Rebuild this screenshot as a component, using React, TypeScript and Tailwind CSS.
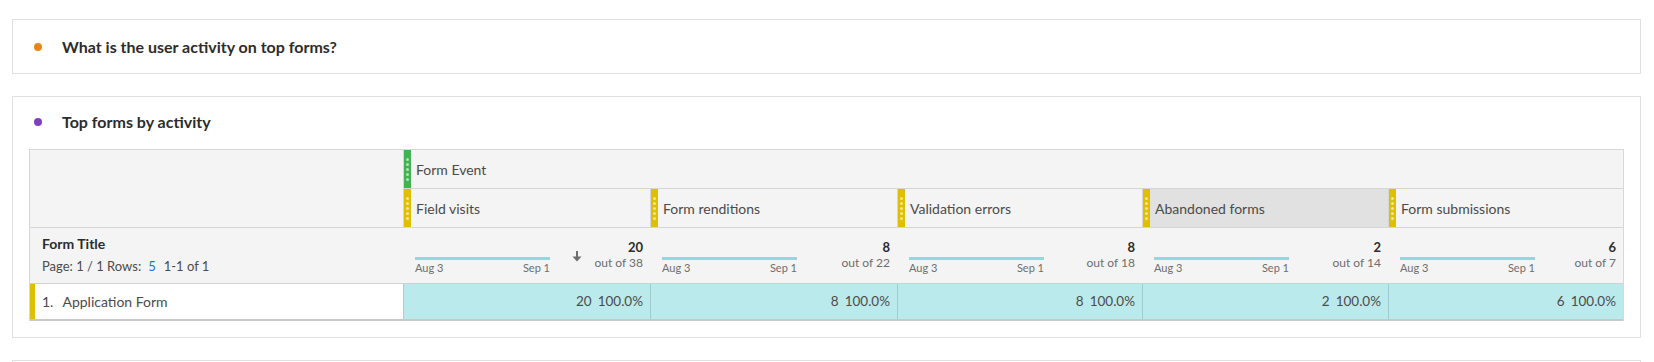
import React from "react";

type Col = {
  name: string;
  w: string;
  total: string;
  out: string;
  val: string;
  arrow?: boolean;
  active?: boolean;
};

const cols: Col[] = [
  { name: "Field visits", w: "w-[247px]", total: "20", out: "38", val: "20", arrow: true },
  { name: "Form renditions", w: "w-[247px]", total: "8", out: "22", val: "8" },
  { name: "Validation errors", w: "w-[245px]", total: "8", out: "18", val: "8" },
  { name: "Abandoned forms", w: "w-[246px]", total: "2", out: "14", val: "2", active: true },
  { name: "Form submissions", w: "w-[235px]", total: "6", out: "7", val: "6" },
];

function Bar({ color }: { color: string }) {
  return (
    <div className={`w-[7px] self-stretch flex flex-col items-center justify-center gap-[2px] ${color}`}>
      {[0, 1, 2, 3, 4].map((i) => (
        <span key={i} className="block w-[3px] h-[3px] rounded-full bg-white/60" />
      ))}
    </div>
  );
}

function Arrow() {
  return (
    <svg width="10" height="11" viewBox="0 0 10 11" className="block">
      <path d="M4 0 H6 V5.5 H9.5 L5 10.5 L0.5 5.5 H4 Z" fill="#6e6e6e" />
    </svg>
  );
}

export default function App() {
  return (
    <div
      className="w-[1654px] h-[362px] overflow-hidden bg-white text-[#4b4b4b]"
      style={{ fontFamily: "Lato, 'Open Sans', sans-serif" }}
    >
      <div className="ml-[12px] w-[1629px] pt-[19px]">
        {/* Card 1 */}
        <div className="h-[55px] border border-[#e0e0e0] flex items-center pl-[21px]">
          <span className="block w-[8px] h-[8px] rounded-full bg-[#e68619]" />
          <span className="ml-[20px] text-[16px] font-bold text-[#2c2c2c]">
            What is the user activity on top forms?
          </span>
        </div>

        {/* Card 2 */}
        <div className="mt-[22px] h-[242px] border border-[#e0e0e0]">
          <div className="h-[52px] flex items-center pl-[21px] pb-[2px]">
            <span className="block w-[8px] h-[8px] rounded-full bg-[#7e3fc0]" />
            <span className="ml-[20px] text-[16px] font-bold text-[#2c2c2c]">Top forms by activity</span>
          </div>

          {/* Table */}
          <div className="ml-[16px] w-[1595px] border-t border-x border-[#d8d8d8]">
            {/* header rows 1 & 2 */}
            <div className="flex border-b border-[#d6d6d6] bg-[#f4f4f4]">
              <div className="w-[373px]" />
              <div className="flex flex-col">
                <div className="flex h-[39px] w-[1220px] border-l border-b border-[#d6d6d6]">
                  <Bar color="bg-[#40b452]" />
                  <span className="self-center ml-[5px] text-[14px] text-[#4b4b4b]">Form Event</span>
                </div>
                <div className="flex h-[38px]">
                  {cols.map((c) => (
                    <div
                      key={c.name}
                      className={`${c.w} flex border-l border-[#d6d6d6] ${c.active ? "bg-[#e1e1e1]" : ""}`}
                    >
                      <Bar color="bg-[#e0bf00]" />
                      <span className="self-center ml-[5px] text-[14px] text-[#4b4b4b]">{c.name}</span>
                    </div>
                  ))}
                </div>
              </div>
            </div>

            {/* header row 3 */}
            <div className="flex h-[56px] border-b border-[#d0d0d0] bg-[#f4f4f4]">
              <div className="w-[373px] pl-[12px] pt-[7px]">
                <div className="text-[14px] font-bold leading-[18px] text-[#2c2c2c]">Form Title</div>
                <div className="mt-[4px] flex items-center text-[13px] leading-[18px] text-[#4b4b4b]">
                  <span>Page: 1 / 1 Rows:</span>
                  <span className="ml-[7px] text-[#1473e6]">5</span>
                  <span className="ml-[8px]">1-1 of 1</span>
                </div>
              </div>
              {cols.map((c) => (
                <div key={c.name} className={`${c.w} flex pl-[12px] pr-[7px]`}>
                  <div className="w-[135px] mt-[29px]">
                    <div className="h-[3px] bg-[#90d9dd]" />
                    <div className="mt-[2px] flex justify-between text-[11px] leading-[11px] text-[#6e6e6e]">
                      <span>Aug 3</span>
                      <span>Sep 1</span>
                    </div>
                  </div>
                  <div className="flex-1 flex justify-end items-start">
                    {c.arrow && (
                      <div className="mt-[23px] mr-[14px]">
                        <Arrow />
                      </div>
                    )}
                    <div className="w-[47px] mt-[11px] flex flex-col items-end leading-[16px] whitespace-nowrap">
                      <span className="text-[13px] font-bold text-[#2c2c2c]">{c.total}</span>
                      <span className="text-[12px] text-[#6e6e6e]">out of {c.out}</span>
                    </div>
                  </div>
                </div>
              ))}
            </div>

            {/* data row */}
            <div className="flex h-[37px] border-b-2 border-[#c8c8c8]">
              <div className="w-[373px] flex bg-white">
                <div className="w-[5px] bg-[#e0bf00]" />
                <div className="self-center ml-[7px] text-[14px] text-[#4b4b4b]">
                  <span>1.</span>
                  <span className="ml-[9px]">Application Form</span>
                </div>
              </div>
              {cols.map((c, i) => (
                <div
                  key={c.name}
                  className={`${c.w} flex items-center justify-end pr-[7px] bg-[#bbeaec] border-l ${
                    i === 0 ? "border-[#c4c4c4]" : "border-[#9dcdd0]"
                  } text-[13.5px] text-[#4b4b4b]`}
                >
                  <span>{c.val}</span>
                  <span className="ml-[6px]">100.0%</span>
                </div>
              ))}
            </div>
          </div>
        </div>

        {/* Card 3 (partially visible) */}
        <div className="mt-[22px] h-[100px] border border-[#e0e0e0]" />
      </div>
    </div>
  );
}
